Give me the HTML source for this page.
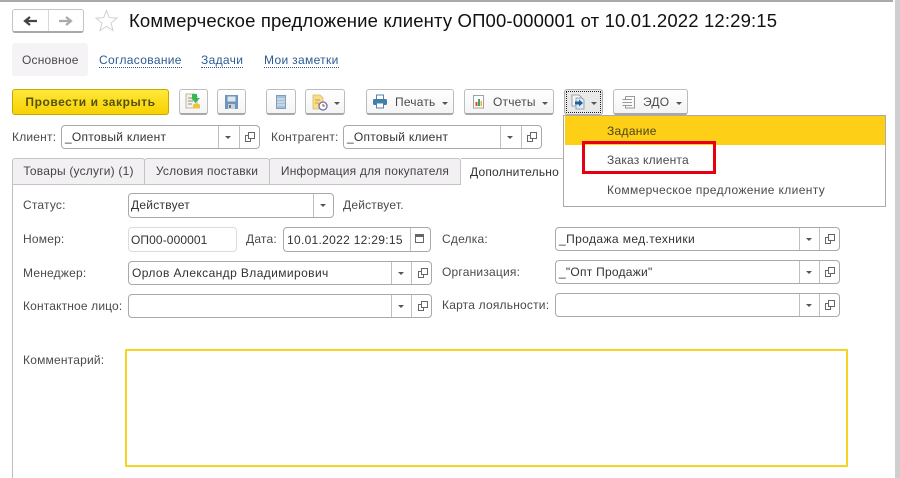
<!DOCTYPE html>
<html><head><meta charset="utf-8">
<style>
html,body{margin:0;padding:0;background:#fff}
body{width:900px;height:478px;position:relative;overflow:hidden;font-family:"Liberation Sans",sans-serif;font-size:12px;color:#4a4a4a}
#w{position:absolute;left:0;top:0;width:900px;height:478px;filter:blur(.35px)}
.a{position:absolute;box-sizing:border-box;white-space:nowrap}
.t{position:absolute;white-space:nowrap;line-height:16px;height:16px;letter-spacing:.2px}
.btn{position:absolute;box-sizing:border-box;height:26px;top:89px;border:1px solid #bcbcbc;border-bottom:2px solid #a8a8a8;border-radius:3px;background:linear-gradient(#fff,#f4f4f4)}
.inp{position:absolute;box-sizing:border-box;border:1px solid #a9a9a9;border-radius:4px;background:#fff;color:#333}
.inp span{position:absolute;left:3px;top:3px;line-height:16px;letter-spacing:.25px;white-space:nowrap}
.d{position:absolute;top:0;bottom:0;width:1px;background:#c0c0c0}
.arr{position:absolute;width:0;height:0;border-left:3px solid transparent;border-right:3px solid transparent;border-top:3px solid #555}
.lnk{color:#2b5b92;border-bottom:1px dotted #2b5b92;height:14px;line-height:14px;letter-spacing:.33px}
.tab{position:absolute;box-sizing:border-box;top:158px;height:27px;background:#f2f0f2;border:1px solid #c4c4c4;border-radius:3px 3px 0 0;line-height:25px;text-align:center;color:#444;letter-spacing:.2px;white-space:nowrap}
svg{position:absolute;overflow:visible}
</style></head><body><div id="w">
<div class="a" style="left:0;top:0;width:893px;height:2px;background:#a9a9a9"></div>
<div class="a" style="left:895px;top:0;width:5px;height:478px;background:#cfcfcf"></div>

<div class="a" style="left:12px;top:9px;width:72px;height:24px;border:1px solid #c4c4c4;border-bottom:2px solid #a9a9a9;border-radius:3px;background:#fff"></div>
<div class="a" style="left:48px;top:10px;width:1px;height:21px;background:#d8d8d8"></div>
<svg style="left:0;top:0" width="130" height="40"><path d="M25 21H37M30 17L25 21L30 25" fill="none" stroke="#444" stroke-width="2.2"/><path d="M59 21H71M66 17L71 21L66 25" fill="none" stroke="#aaa" stroke-width="2.2"/><path d="M106.500 10.500L109.300 17.700L117 18.100L111 23L113 30.500L106.500 26.300L100 30.500L102 23L96 18.100L103.700 17.700Z" fill="#fff" stroke="#d0d0d0" stroke-width="1"/></svg>
<div class="t" style="left:129px;top:11px;height:20px;line-height:20px;font-size:18.5px;color:#111;letter-spacing:.15px">Коммерческое предложение клиенту ОП00-000001 от 10.01.2022 12:29:15</div>

<div class="a" style="left:12px;top:43px;width:76px;height:33px;background:#f5f3f5;border-radius:3px"></div>
<div class="t" style="left:22px;top:52px">Основное</div>
<div class="t lnk" style="left:99px;top:53px">Согласование</div>
<div class="t lnk" style="left:201px;top:53px">Задачи</div>
<div class="t lnk" style="left:264px;top:53px">Мои заметки</div>

<div class="a" style="left:12px;top:89px;width:157px;height:26px;border:1px solid #c6a800;border-radius:3px;background:linear-gradient(#ffe93a,#f7d000);text-align:center;line-height:24px;font-weight:bold;color:#54500f;letter-spacing:.55px;font-size:12px">Провести и закрыть</div>

<div class="btn" style="left:179px;width:29px"></div>
<svg style="left:184px;top:93px" width="20" height="18"><path d="M2 1H11L13 3V15H2Z" fill="#f6f3e4" stroke="#a9a78c" stroke-width=".8"/><path d="M4 5H9M4 8H9M4 11H8" stroke="#8f8f8f"/><path d="M8 1H13V5H16L11.500 10L7 5H8Z" fill="#34b957"/><ellipse cx="12.500" cy="12" rx="3.500" ry="1.500" fill="#ecc53f"/><rect x="9" y="12" width="7" height="3.500" fill="#ecc53f"/></svg>
<div class="btn" style="left:217px;width:29px"></div>
<svg style="left:225px;top:95px" width="14" height="15"><path d="M0 0H13V14H0Z" fill="#6f95b8"/><rect x="2.500" y="1.500" width="8" height="5" fill="#dce7f0"/><rect x="3" y="9" width="7" height="5" fill="#c9d0d6"/><rect x="4" y="10" width="2" height="3" fill="#5b7a94"/></svg>
<div class="btn" style="left:266px;width:30px"></div>
<svg style="left:276px;top:95px" width="10" height="15"><rect x=".5" y=".5" width="9" height="13" fill="#a7c0d8" stroke="#7f9cb8"/><path d="M1 4H9M1 7H9M1 10H9" stroke="#e4edf4"/></svg>
<div class="btn" style="left:305px;width:40px"></div>
<svg style="left:312px;top:94px" width="18" height="18"><path d="M1 1H8L11 4V15H1Z" fill="#f6dc8c" stroke="#d9b95a" stroke-width=".8"/><path d="M3 6H8M3 9H7" stroke="#c89f3c"/><circle cx="11" cy="12" r="4" fill="#fff" stroke="#6a72a8" stroke-width="1.300"/><path d="M11 10V12H13" stroke="#c0413a" fill="none"/></svg>
<div class="arr" style="left:334px;top:102px"></div>

<div class="btn" style="left:366px;width:88px"></div>
<svg style="left:373px;top:95px" width="15" height="14"><rect x="3.500" y="0" width="7" height="5" fill="#fff" stroke="#5a82a6"/><rect x="0" y="4" width="14" height="6" rx="1.500" fill="#3f7dab"/><rect x="3.500" y="8" width="7" height="5" fill="#fff" stroke="#5a82a6"/></svg>
<div class="t" style="left:395px;top:94px">Печать</div>
<div class="arr" style="left:442px;top:102px"></div>

<div class="btn" style="left:464px;width:90px"></div>
<svg style="left:473px;top:95px" width="12" height="14"><rect x=".5" y=".5" width="10" height="12.500" fill="#fff" stroke="#a89f9a"/><rect x="2.500" y="7" width="2" height="4" fill="#d9453a"/><rect x="5" y="4" width="2" height="7" fill="#46a35a"/><rect x="7.500" y="6" width="1.500" height="5" fill="#e3b23a"/></svg>
<div class="t" style="left:493px;top:94px">Отчеты</div>
<div class="arr" style="left:542px;top:102px"></div>

<div class="a" style="left:564px;top:89px;width:39px;height:26px;border:1px solid #b0b0b0;border-radius:3px;background:#e9e9e9"></div>
<div class="a" style="left:566px;top:91px;width:35px;height:22px;border:1px dotted #222"></div>
<svg style="left:571px;top:94px" width="16" height="16"><path d="M1 1H8L10 3V12H1Z" fill="#f8f8f8" stroke="#7f8a9a" stroke-width=".8"/><path d="M5 4H11L13 6V15H5Z" fill="#e4edf4" stroke="#7b90a8" stroke-width=".8"/><path d="M4 7.500H8V5.500L12 9L8 12.500V10.500H4Z" fill="#1f5f9a"/></svg>
<div class="arr" style="left:591px;top:102px"></div>

<div class="btn" style="left:613px;width:75px"></div>
<svg style="left:621px;top:95px" width="16" height="14" fill="none" stroke="#999"><path d="M4.500 1.500H13.500V9.500M4.500 1.500V4M1.500 4.500H11M1.500 7.500H11M1.500 10.500H11M4.500 10.500V13H13.500V9.500"/></svg>
<div class="t" style="left:643px;top:94px">ЭДО</div>
<div class="arr" style="left:676px;top:102px"></div>

<div class="t" style="left:12px;top:129px">Клиент:</div>
<div class="inp" style="left:61px;top:125px;width:199px;height:24px"><span>_Оптовый клиент</span><i class="d" style="left:156px"></i><i class="d" style="left:177px"></i><i class="arr" style="left:163px;top:10px"></i></div>
<svg style="left:245px;top:132px" width="12" height="11" fill="none" stroke="#666"><path d="M3.500 .5H9.500V6.500H3.500Z"/><path d="M3.500 3.500H.5V9.500H5.500V6.500"/></svg>
<div class="t" style="left:271px;top:129px">Контрагент:</div>
<div class="inp" style="left:343px;top:125px;width:199px;height:24px"><span>_Оптовый клиент</span><i class="d" style="left:156px"></i><i class="d" style="left:177px"></i><i class="arr" style="left:163px;top:10px"></i></div>
<svg style="left:527px;top:132px" width="12" height="11" fill="none" stroke="#666"><path d="M3.500 .5H9.500V6.500H3.500Z"/><path d="M3.500 3.500H.5V9.500H5.500V6.500"/></svg>

<div class="a" style="left:12px;top:184px;width:1px;height:294px;background:#bdbdbd"></div>
<div class="a" style="left:12px;top:184px;width:550px;height:1px;background:#c4c4c4"></div>
<div class="tab" style="left:12px;width:133px">Товары (услуги) (1)</div>
<div class="tab" style="left:144px;width:126px">Условия поставки</div>
<div class="tab" style="left:269px;width:192px">Информация для покупателя</div>
<div class="a" style="left:461px;top:158px;width:102px;height:27px;background:#fff;border-top:1px solid #bdbdbd;line-height:26px;padding-left:9px;color:#333;letter-spacing:.2px;overflow:hidden">Дополнительно</div>

<div class="t" style="left:23px;top:197px">Статус:</div>
<div class="inp" style="left:128px;top:193px;width:206px;height:25px"><span style="left:2px">Действует</span><i class="d" style="left:184px"></i><i class="arr" style="left:191px;top:10px"></i></div>
<div class="t" style="left:343px;top:197px">Действует.</div>

<div class="t" style="left:23px;top:231px">Номер:</div>
<div class="inp" style="left:128px;top:227px;width:109px;height:25px;border-color:#dcdcdc"><span style="top:4px;left:2px;letter-spacing:.1px">ОП00-000001</span></div>
<div class="t" style="left:246px;top:231px">Дата:</div>
<div class="inp" style="left:283px;top:227px;width:148px;height:25px"><span style="top:4px;letter-spacing:.3px">10.01.2022 12:29:15</span><i class="d" style="left:126px"></i></div>
<svg style="left:415px;top:233px" width="10" height="11"><rect x=".5" y="1.500" width="8" height="8" fill="#fff" stroke="#666"/><rect x="1" y="1" width="7" height="3" fill="#666"/></svg>

<div class="t" style="left:23px;top:265px">Менеджер:</div>
<div class="inp" style="left:128px;top:261px;width:304px;height:24px"><span style="letter-spacing:.4px">Орлов Александр Владимирович</span><i class="d" style="left:262px"></i><i class="d" style="left:282px"></i><i class="arr" style="left:269px;top:10px"></i></div>
<svg style="left:418px;top:268px" width="12" height="11" fill="none" stroke="#666"><path d="M3.500 .5H9.500V6.500H3.500Z"/><path d="M3.500 3.500H.5V9.500H5.500V6.500"/></svg>
<div class="t" style="left:23px;top:298px;letter-spacing:.15px">Контактное лицо:</div>
<div class="inp" style="left:128px;top:294px;width:304px;height:24px"><i class="d" style="left:262px"></i><i class="d" style="left:282px"></i><i class="arr" style="left:269px;top:10px"></i></div>
<svg style="left:418px;top:301px" width="12" height="11" fill="none" stroke="#666"><path d="M3.500 .5H9.500V6.500H3.500Z"/><path d="M3.500 3.500H.5V9.500H5.500V6.500"/></svg>

<div class="t" style="left:442px;top:231px">Сделка:</div>
<div class="inp" style="left:555px;top:227px;width:285px;height:24px"><span style="letter-spacing:.4px">_Продажа мед.техники</span><i class="d" style="left:243px"></i><i class="d" style="left:263px"></i><i class="arr" style="left:250px;top:10px"></i></div>
<svg style="left:825px;top:234px" width="12" height="11" fill="none" stroke="#666"><path d="M3.500 .5H9.500V6.500H3.500Z"/><path d="M3.500 3.500H.5V9.500H5.500V6.500"/></svg>
<div class="t" style="left:442px;top:264px">Организация:</div>
<div class="inp" style="left:555px;top:260px;width:285px;height:24px"><span>_"Опт Продажи"</span><i class="d" style="left:243px"></i><i class="d" style="left:263px"></i><i class="arr" style="left:250px;top:10px"></i></div>
<svg style="left:825px;top:267px" width="12" height="11" fill="none" stroke="#666"><path d="M3.500 .5H9.500V6.500H3.500Z"/><path d="M3.500 3.500H.5V9.500H5.500V6.500"/></svg>
<div class="t" style="left:442px;top:297px">Карта лояльности:</div>
<div class="inp" style="left:555px;top:293px;width:285px;height:24px"><i class="d" style="left:243px"></i><i class="d" style="left:263px"></i><i class="arr" style="left:250px;top:10px"></i></div>
<svg style="left:825px;top:300px" width="12" height="11" fill="none" stroke="#666"><path d="M3.500 .5H9.500V6.500H3.500Z"/><path d="M3.500 3.500H.5V9.500H5.500V6.500"/></svg>

<div class="t" style="left:23px;top:352px">Комментарий:</div>
<div class="a" style="left:125px;top:349px;width:723px;height:118px;border:2px solid #f5d428;background:#fff"></div>

<div class="a" style="left:563px;top:115px;width:323px;height:92px;background:#fff;border:1px solid #aaa"></div>
<div class="a" style="left:565px;top:116px;width:320px;height:29px;background:#fdd017"></div>
<div class="t" style="left:607px;top:123px;color:#4a4420;letter-spacing:.3px">Задание</div>
<div class="t" style="left:607px;top:152px">Заказ клиента</div>
<div class="t" style="left:607px;top:182px;letter-spacing:.36px">Коммерческое предложение клиенту</div>
<div class="a" style="left:582px;top:141px;width:134px;height:33px;border:3px solid #e60012"></div>
</div></body></html>
